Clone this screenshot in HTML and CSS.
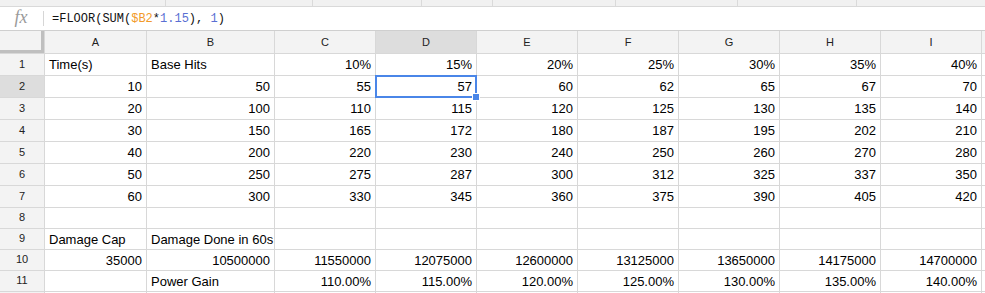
FILE: index.html
```html
<!DOCTYPE html>
<html>
<head>
  <title>Damage Sheet</title>
  <link rel="stylesheet" href="styles.css">
</head>
<body>
  <div class="toolbar-edge">
    <span class="tb" style="width:166px"></span>
    <span class="tb" style="width:147px"></span>
    <span class="tb" style="width:109px"></span>
    <span class="tb" style="width:71px"></span>
    <span class="tb" style="width:123px"></span>
    <span class="tb" style="width:122px"></span>
    <span class="tb" style="width:119px"></span>
  </div>

  <div class="formula-bar">
    <div class="fx">fx</div>
    <div class="formula">=FLOOR(SUM(<span class="ref">$B2</span>*<span class="num">1.15</span>), <span class="num">1</span>)</div>
  </div>

  <div class="grid">
    <div class="hd corner"></div>
    <div class="hd">A</div>
    <div class="hd">B</div>
    <div class="hd">C</div>
    <div class="hd sel">D</div>
    <div class="hd">E</div>
    <div class="hd">F</div>
    <div class="hd">G</div>
    <div class="hd">H</div>
    <div class="hd">I</div>
    <div class="hd"></div>

    <div class="rh">1</div>
    <div class="c">Time(s)</div>
    <div class="c">Base Hits</div>
    <div class="c n">10%</div>
    <div class="c n">15%</div>
    <div class="c n">20%</div>
    <div class="c n">25%</div>
    <div class="c n">30%</div>
    <div class="c n">35%</div>
    <div class="c n">40%</div>
    <div class="c"></div>

    <div class="rh sel">2</div>
    <div class="c n">10</div>
    <div class="c n">50</div>
    <div class="c n">55</div>
    <div class="c n active">57<span class="handle"></span></div>
    <div class="c n">60</div>
    <div class="c n">62</div>
    <div class="c n">65</div>
    <div class="c n">67</div>
    <div class="c n">70</div>
    <div class="c"></div>

    <div class="rh">3</div>
    <div class="c n">20</div>
    <div class="c n">100</div>
    <div class="c n">110</div>
    <div class="c n">115</div>
    <div class="c n">120</div>
    <div class="c n">125</div>
    <div class="c n">130</div>
    <div class="c n">135</div>
    <div class="c n">140</div>
    <div class="c"></div>

    <div class="rh">4</div>
    <div class="c n">30</div>
    <div class="c n">150</div>
    <div class="c n">165</div>
    <div class="c n">172</div>
    <div class="c n">180</div>
    <div class="c n">187</div>
    <div class="c n">195</div>
    <div class="c n">202</div>
    <div class="c n">210</div>
    <div class="c"></div>

    <div class="rh">5</div>
    <div class="c n">40</div>
    <div class="c n">200</div>
    <div class="c n">220</div>
    <div class="c n">230</div>
    <div class="c n">240</div>
    <div class="c n">250</div>
    <div class="c n">260</div>
    <div class="c n">270</div>
    <div class="c n">280</div>
    <div class="c"></div>

    <div class="rh">6</div>
    <div class="c n">50</div>
    <div class="c n">250</div>
    <div class="c n">275</div>
    <div class="c n">287</div>
    <div class="c n">300</div>
    <div class="c n">312</div>
    <div class="c n">325</div>
    <div class="c n">337</div>
    <div class="c n">350</div>
    <div class="c"></div>

    <div class="rh">7</div>
    <div class="c n">60</div>
    <div class="c n">300</div>
    <div class="c n">330</div>
    <div class="c n">345</div>
    <div class="c n">360</div>
    <div class="c n">375</div>
    <div class="c n">390</div>
    <div class="c n">405</div>
    <div class="c n">420</div>
    <div class="c"></div>

    <div class="rh">8</div>
    <div class="c"></div>
    <div class="c"></div>
    <div class="c"></div>
    <div class="c"></div>
    <div class="c"></div>
    <div class="c"></div>
    <div class="c"></div>
    <div class="c"></div>
    <div class="c"></div>
    <div class="c"></div>

    <div class="rh">9</div>
    <div class="c">Damage Cap</div>
    <div class="c">Damage Done in 60s</div>
    <div class="c"></div>
    <div class="c"></div>
    <div class="c"></div>
    <div class="c"></div>
    <div class="c"></div>
    <div class="c"></div>
    <div class="c"></div>
    <div class="c"></div>

    <div class="rh">10</div>
    <div class="c n">35000</div>
    <div class="c n">10500000</div>
    <div class="c n">11550000</div>
    <div class="c n">12075000</div>
    <div class="c n">12600000</div>
    <div class="c n">13125000</div>
    <div class="c n">13650000</div>
    <div class="c n">14175000</div>
    <div class="c n">14700000</div>
    <div class="c"></div>

    <div class="rh">11</div>
    <div class="c"></div>
    <div class="c">Power Gain</div>
    <div class="c n">110.00%</div>
    <div class="c n">115.00%</div>
    <div class="c n">120.00%</div>
    <div class="c n">125.00%</div>
    <div class="c n">130.00%</div>
    <div class="c n">135.00%</div>
    <div class="c n">140.00%</div>
    <div class="c"></div>

    <div class="rh"></div>
    <div class="c"></div>
    <div class="c"></div>
    <div class="c"></div>
    <div class="c"></div>
    <div class="c"></div>
    <div class="c"></div>
    <div class="c"></div>
    <div class="c"></div>
    <div class="c"></div>
    <div class="c"></div>
  </div>
</body>
</html>
```

FILE: styles.css
```css
html, body {
  margin: 0;
  height: 293px;
  overflow: hidden;
  background: #fff;
  font-family: "Liberation Sans", Arial, sans-serif;
}
.toolbar-edge {
  display: flex;
  height: 6px;
  background: #f1f1f1;
  border-bottom: 1px solid #d9d9d9;
}
.tb {
  height: 100%;
  border-right: 1px solid #dadada;
  box-sizing: border-box;
}
.formula-bar {
  display: flex;
  align-items: center;
  height: 23px;
  border-bottom: 1px solid #cfcfcf;
}
.fx {
  width: 44px;
  box-sizing: border-box;
  text-align: center;
  font-family: "Liberation Serif", serif;
  font-style: italic;
  font-size: 18px;
  color: #9a9a9a;
  border-right: 1px solid #d6d6d6;
  height: 15px;
  line-height: 13px;
  padding-right: 1px;
}
.formula {
  padding-left: 8px;
  font-family: "Liberation Mono", "DejaVu Sans Mono", monospace;
  font-size: 12px;
  color: #111;
  padding-top: 1px;
}
.ref { color: #f29a2a; }
.num { color: #5a6fd3; }

.grid {
  display: grid;
  grid-template-columns: 44px 101px 127px repeat(7, 100px) 1fr;
  grid-template-rows: 22px repeat(7, 21px) repeat(4, 20px) 20px;
  gap: 1px;
  background: #d8d8d8;
}
.hd {
  background: #f3f3f3;
  font-size: 11px;
  color: #222;
  display: flex;
  align-items: center;
  justify-content: center;
}
.corner {
  box-shadow: inset -3px -3px 0 #bfbfbf;
}
.rh {
  background: #f3f3f3;
  font-size: 11px;
  color: #222;
  display: flex;
  align-items: center;
  justify-content: center;
  padding-bottom: 2px;
}
.sel {
  background: #dddddd;
}
.c {
  background: #fff;
  font-size: 13px;
  color: #000;
  padding: 0 4px 0 4px;
  display: flex;
  align-items: center;
  white-space: nowrap;
  overflow: hidden;
}
.n {
  justify-content: flex-end;
}
.active {
  position: relative;
  overflow: visible;
  box-shadow: 0 0 0 1px #4a86e8, inset 0 0 0 1px #4a86e8;
}
.handle {
  position: absolute;
  right: -4px;
  bottom: -4px;
  width: 6px;
  height: 6px;
  background: #4a86e8;
  border: 1px solid #fff;
  z-index: 2;
}
```
